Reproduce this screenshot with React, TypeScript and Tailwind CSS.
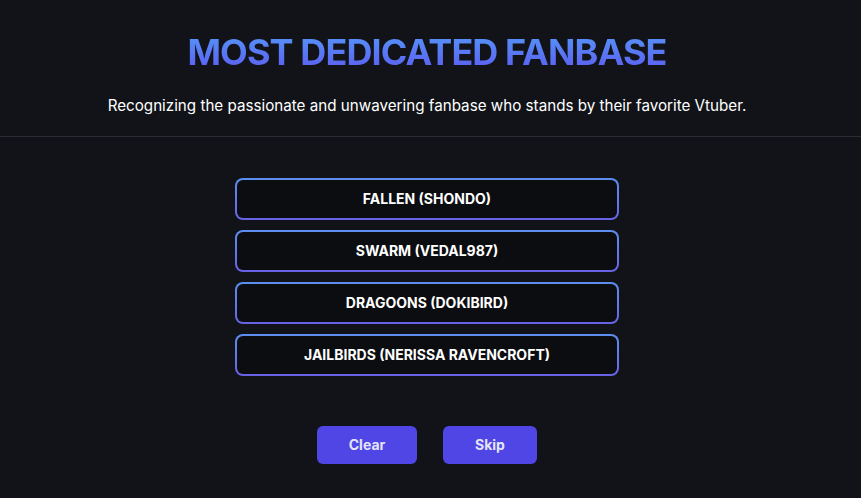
import React from "react";

const options = [
  "FALLEN (SHONDO)",
  "SWARM (VEDAL987)",
  "DRAGOONS (DOKIBIRD)",
  "JAILBIRDS (NERISSA RAVENCROFT)",
];

export default function App() {
  return (
    <div
      className="w-full min-h-[498px] bg-[#111318] text-white"
      style={{ fontFamily: "Inter, 'Noto Sans', sans-serif" }}
    >
      <div className="flex flex-col items-center pt-8 pb-[18px] pr-[7px] border-b border-[#2a2d33]">
        <h1 className="text-4xl leading-10 font-bold tracking-tight bg-gradient-to-b from-[#5596f8] to-[#5b5af0] bg-clip-text text-transparent">
          MOST DEDICATED FANBASE
        </h1>
        <p className="mt-[22px] text-[15.2px] leading-6 text-white">
          Recognizing the passionate and unwavering fanbase who stands by their favorite Vtuber.
        </p>
      </div>
      <div className="flex flex-col items-center pt-[41px] pr-[7px]">
        <div className="flex flex-col gap-[10px] w-96">
          {options.map((o) => (
            <div
              key={o}
              className="p-[2px] rounded-lg bg-gradient-to-b from-[#5a8ff0] to-[#6862e6]"
            >
              <div className="h-[38px] rounded-[6px] bg-[#0c0d10] flex items-center justify-center text-sm font-bold text-white">
                {o}
              </div>
            </div>
          ))}
        </div>
        <div className="flex gap-[26px] mt-[50px]">
          <button className="w-[100px] h-[38px] rounded-md bg-[#4f46e5] text-sm font-bold text-[#e4e4f7]">
            Clear
          </button>
          <button className="w-[94px] h-[38px] rounded-md bg-[#4f46e5] text-sm font-bold text-[#e4e4f7]">
            Skip
          </button>
        </div>
      </div>
    </div>
  );
}
